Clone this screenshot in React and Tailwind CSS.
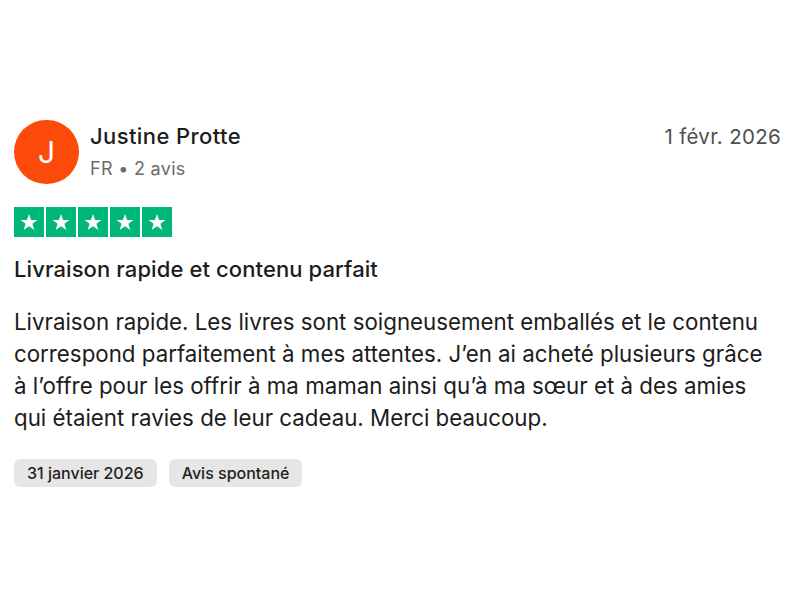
import React from 'react';

function Star() {
  return (
    <div className="w-[30px] h-[30px] bg-[#00b67a] flex items-center justify-center">
      <svg width="20" height="20" viewBox="0 0 24 24">
        <path d="M12 2.5l2.6 7.2h7.6l-6.1 4.5 2.3 7.3L12 17l-6.4 4.5 2.3-7.3-6.1-4.5h7.6z" fill="#fff" />
      </svg>
    </div>
  );
}

export default function App() {
  return (
    <div className="w-[800px] h-[591px] bg-white px-[14px] pt-[120px] font-['Inter',sans-serif] text-[#1c1c1c]">
      <div className="flex items-start justify-between">
        <div className="flex items-center gap-[11px]">
          <div className="w-[65px] h-[64px] rounded-full bg-[#fc4a0b] flex items-center justify-center text-white text-[30px] font-normal">J</div>
          <div className="flex flex-col gap-[5px]">
            <div className="text-[22px] font-medium leading-[27px] tracking-[0.4px]">Justine Protte</div>
            <div className="text-[18px] text-[#6b6b6b] leading-[27px] tracking-[0.3px]">FR • 2 avis</div>
          </div>
        </div>
        <div className="text-[20.5px] text-[#4f4f4f] pt-[2px] pr-[5px] tracking-[0.3px]">1 févr. 2026</div>
      </div>

      <div className="flex gap-[2px] mt-[23px]">
        <Star /><Star /><Star /><Star /><Star />
      </div>

      <div className="mt-[18px] text-[22px] font-medium leading-[28px] tracking-[0.1px]">Livraison rapide et contenu parfait</div>

      <p className="mt-[23px] text-[22.3px] leading-[32px] w-[762px]">
        Livraison rapide. Les livres sont soigneusement emballés et le contenu correspond parfaitement à mes attentes. J’en ai acheté plusieurs grâce à l’offre pour les offrir à ma maman ainsi qu’à ma sœur et à des amies qui étaient ravies de leur cadeau. Merci beaucoup.
      </p>

      <div className="flex gap-3 mt-[25px]">
        <span className="bg-[#e6e6e6] rounded-[6px] px-[13px] h-[28px] flex items-center text-[16px] font-medium text-[#222]">31 janvier 2026</span>
        <span className="bg-[#e6e6e6] rounded-[6px] px-[13px] h-[28px] flex items-center text-[16px] font-medium text-[#222]">Avis spontané</span>
      </div>
    </div>
  );
}
